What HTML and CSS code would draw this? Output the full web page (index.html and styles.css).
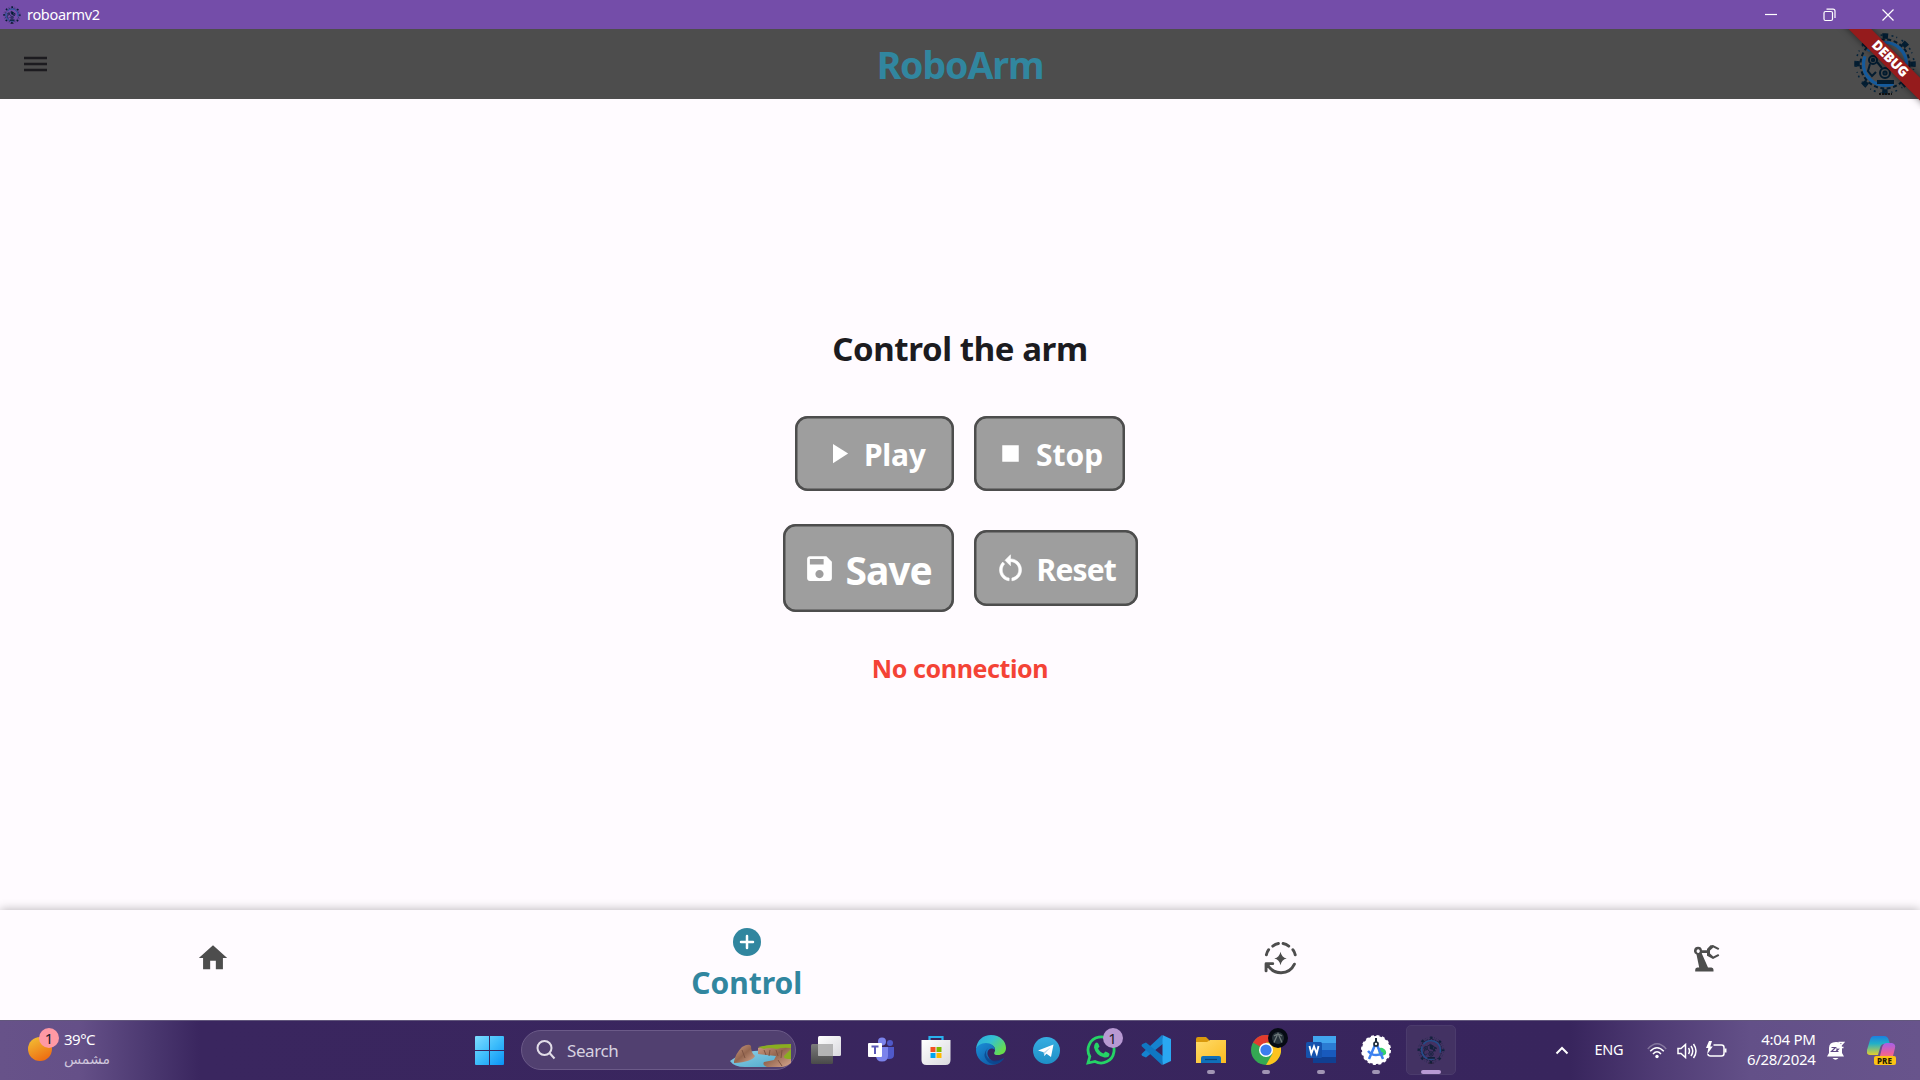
FILE: index.html
```html
<!DOCTYPE html>
<html lang="en">
<head>
<meta charset="utf-8">
<title>roboarmv2</title>
<link rel="stylesheet" href="styles.css">
</head>
<body>
<svg class="defs" aria-hidden="true">
  <defs>
    <symbol id="logo" viewBox="0 0 64 64">
      <circle cx="32" cy="32" r="24.5" fill="none" stroke="#031c30" stroke-width="2" stroke-dasharray="4 2.5"/>
      <circle cx="32" cy="32" r="28" fill="none" stroke="#031c30" stroke-width="5.5" stroke-dasharray="5.6 16.4" stroke-dashoffset="2.8"/>
      <circle cx="32" cy="32" r="29" fill="none" stroke="#06243b" stroke-width="1.5" stroke-dasharray="2 3 1 5"/>
      <circle cx="32" cy="32" r="21.5" fill="none" stroke="#145a9c" stroke-width="3.2" stroke-dasharray="50 6 60 19" stroke-dashoffset="-25"/>
      <g fill="none" stroke="#031c30" stroke-width="2">
        <circle cx="20" cy="28" r="4"/><circle cx="20" cy="28" r="1.2"/>
        <circle cx="32" cy="41" r="5"/><circle cx="32" cy="41" r="1.6"/>
        <path d="M17 32l-2 7 4 5 4-4M23 24l8-5 9 6-2 8M24 30l5 6M36 37l5-9"/>
        <path d="M40 26l5 3M38 30l4 5" stroke-width="3"/>
      </g>
      <path d="M24 48h17v4H24zM29 19l9 4-2 9-7-3z" fill="#031c30"/>
      <path d="M26 62h13" stroke="#111" stroke-width="2" stroke-dasharray="2 1"/>
    </symbol>
    <linearGradient id="win" x1="0" y1="0" x2="1" y2="1"><stop offset="0" stop-color="#7fdcff"/><stop offset=".5" stop-color="#3dbdfb"/><stop offset="1" stop-color="#0a92f5"/></linearGradient>
    <linearGradient id="sun" x1=".2" y1="0" x2=".7" y2="1"><stop offset="0" stop-color="#f2bd33"/><stop offset="1" stop-color="#ee6a11"/></linearGradient>
    <linearGradient id="sheet" x1="0" y1="0" x2="1" y2="1"><stop offset="0" stop-color="#fff"/><stop offset="1" stop-color="#d9d9de"/></linearGradient>
    <linearGradient id="slate" x1="0" y1="0" x2="0" y2="1"><stop offset="0" stop-color="#7b7b7b"/><stop offset="1" stop-color="#4a4a4a"/></linearGradient>
    <linearGradient id="edgeTop" x1="0" y1="0" x2="1" y2=".6"><stop offset="0" stop-color="#2aa9e0"/><stop offset=".5" stop-color="#34c1d2"/><stop offset="1" stop-color="#68dc4c"/></linearGradient>
    <linearGradient id="edgeLow" x1="0" y1="0" x2="1" y2="1"><stop offset="0" stop-color="#1a8fd8"/><stop offset="1" stop-color="#0e4d98"/></linearGradient>
    <linearGradient id="tele" x1="0" y1="0" x2="0" y2="1"><stop offset="0" stop-color="#37aee2"/><stop offset="1" stop-color="#1e8fc6"/></linearGradient>
    <linearGradient id="folder" x1="0" y1="0" x2="1" y2="1"><stop offset="0" stop-color="#ffdb6a"/><stop offset="1" stop-color="#fbbb1f"/></linearGradient>
    <linearGradient id="water" x1="0" y1="0" x2="1" y2="1"><stop offset="0" stop-color="#8fd2ea"/><stop offset="1" stop-color="#4aa5c8"/></linearGradient>
    <linearGradient id="rock" x1="0" y1="0" x2="1" y2="1"><stop offset="0" stop-color="#cf9c83"/><stop offset=".5" stop-color="#94664f"/><stop offset="1" stop-color="#d6a68e"/></linearGradient>
    <linearGradient id="copA" x1="0" y1="0" x2="0" y2="1"><stop offset="0" stop-color="#1b7fe0"/><stop offset=".4" stop-color="#21b0c8"/><stop offset="1" stop-color="#e6cf2c"/></linearGradient>
    <linearGradient id="copB" x1="0" y1="0" x2="0" y2="1"><stop offset="0" stop-color="#a560e8"/><stop offset=".6" stop-color="#ec5f9b"/><stop offset="1" stop-color="#f58a5c"/></linearGradient>
  </defs>
</svg>

<header class="titlebar">
  <svg class="titlebar-logo"><use href="#logo"/></svg>
  <span class="titlebar-name">roboarmv2</span>
  <div class="window-buttons">
    <svg viewBox="0 0 14 14"><path d="M1 6.5h12"/></svg>
    <svg viewBox="0 0 14 14"><rect x="1" y="3.5" width="8.5" height="9" rx="1.5"/><path d="M3.500 1.200H10a2 2 0 0 1 2 2V10"/></svg>
    <svg viewBox="0 0 14 14"><path d="M1.500 1.500l11 11M12.500 1.500l-11 11"/></svg>
  </div>
</header>

<section class="appbar">
  <svg class="menu-icon" viewBox="0 0 24 16"><path d="M0 2h23M0 8h23M0 14h23"/></svg>
  <h1 class="app-title">RoboArm</h1>
  <svg class="appbar-logo"><use href="#logo"/></svg>
  <div class="debug-corner"><span class="debug-banner">DEBUG</span></div>
</section>

<main class="content">
  <h2 class="heading">Control the arm</h2>
  <div class="button-row row-first">
    <button class="action play"><svg viewBox="0 0 24 24"><path d="M8 5v14l11-7z"/></svg><span>Play</span></button>
    <button class="action stop"><svg viewBox="0 0 24 24"><path d="M6 6h12v12H6z"/></svg><span>Stop</span></button>
  </div>
  <div class="button-row row-second">
    <button class="action save"><svg viewBox="0 0 24 24"><path d="M17 3H5c-1.110 0-2 .9-2 2v14c0 1.100.89 2 2 2h14c1.100 0 2-.9 2-2V7l-4-4zm-5 16c-1.660 0-3-1.340-3-3s1.340-3 3-3 3 1.340 3 3-1.340 3-3 3zm3-10H5V5h10v4z"/></svg><span>Save</span></button>
    <button class="action reset"><svg viewBox="0 0 24 24"><path d="M12 5V2L8 6l4 4V7c3.310 0 6 2.690 6 6 0 2.970-2.170 5.430-5 5.910v2.020c3.950-.49 7-3.850 7-7.930 0-4.420-3.580-8-8-8zm-6 8c0-1.650.67-3.150 1.760-4.240L6.340 7.340C4.900 8.790 4 10.790 4 13c0 4.080 3.050 7.440 7 7.930v-2.020c-2.830-.48-5-2.940-5-5.910z" stroke="#fff" stroke-width=".4"/></svg><span>Reset</span></button>
  </div>
  <p class="status">No connection</p>
</main>

<nav class="bottom-nav">
  <a class="nav-item"><svg class="nav-home" viewBox="0 0 24 24"><path d="M10 20v-6h4v6h5v-8h3L12 3 2 12h3v8z"/></svg></a>
  <a class="nav-item selected">
    <svg class="nav-plus" viewBox="0 0 28 28"><circle cx="14" cy="14" r="14"/><path d="M14 8v12M8 14h12" stroke="#fff" stroke-width="2.500" stroke-linecap="round"/></svg>
    <span>Control</span>
  </a>
  <a class="nav-item">
    <svg class="nav-auto" viewBox="0 0 32 32">
      <path class="line" d="M2.300 12.500Q3 9.500 4.500 7.500M8.500 4Q11 2 14 1.500M18.500 1.500Q21.500 2 24 4M28 7.500Q29.500 9.500 30.300 12.500M29.500 21.500A14.500 14.500 0 0 1 3.500 22M2 28v-7h6.500"/>
      <path d="M16 9.500q1 5.500 6 6.500q-5 1-6 6.500q-1-5.500-6-6.500q5-1 6-6.500z"/>
    </svg>
  </a>
  <a class="nav-item">
    <svg class="nav-arm" viewBox="0 0 27 27">
      <path fill-rule="evenodd" d="M4 1.800a4 4 0 0 1 4 3.400h5V4l3.500-3.800 1 .1L19 0l6.300 3.200-1 1.800-5-2.500L16 5.500v3l3.300 3 5-2.500 1 1.800L19 14l-6-3.300V8H8l-.2.500 6.200 14h3.500q2 .2 2 2.200v1.800H1.200v-1.800q0-2 2-2.200h2L2.500 9.500A4 4 0 0 1 4 1.800zm.2 2.500a1.600 1.800 0 1 0 .01 0z"/>
    </svg>
  </a>
</nav>

<footer class="taskbar">
  <div class="weather">
    <div class="weather-icon"><svg viewBox="0 0 24 24"><circle cx="12" cy="12" r="12" fill="url(#sun)"/></svg><span class="badge weather-badge">1</span></div>
    <div class="weather-text"><span>39°C</span><span class="weather-state">مشمس</span></div>
  </div>

  <div class="task start"><svg class="i29" viewBox="0 0 29 29"><path fill="url(#win)" d="M0 1q0-1 1-1h13v14H0zM15 0h13q1 0 1 1v13H15zM0 15h14v14H1q-1 0-1-1zM15 15h14v13q0 1-1 1H15z"/></svg></div>

  <div class="search">
    <svg class="search-icon" viewBox="0 0 20 20"><circle cx="8.500" cy="8" r="7"/><path d="M13.500 13l5 5.500"/></svg>
    <span>Search</span>
    <svg class="search-art" viewBox="0 0 62 24">
      <path d="M0 17Q12 8 24 7q8-1 16 0l20 1v8q-5 7-15 7H15Q4 23 0 17z" fill="url(#water)"/>
      <path d="M4 17q2-8 8-14 7-4 9-1 0 7 4 10-3 6-21 7z" fill="url(#rock)"/>
      <path d="M28 4q10-4 33-3v18q-5 4-10 4H37q-5-2-3-5l10-2 2-4-18-2z" fill="url(#rock)"/>
      <path d="M28 3q14-3 33-3v4q-9-1-14 1-8-2-13 0zM61 5v10q-8 0-7-3z" fill="#8aae20"/>
      <path d="M34 6l2 5M40 6l-1 6M46 6l2 6M52 6l-1 8M12 6l3 8M48 16l4 6" stroke="#7d5342" stroke-width="1"/>
    </svg>
  </div>

  <div class="tasks">
    <div class="task"><svg class="i30" viewBox="0 0 30 30"><rect x="0" y="9" width="22" height="20" rx="1.500" fill="url(#slate)"/><rect x="7" y="1" width="23" height="20" rx="1.500" fill="url(#sheet)"/><rect x="7" y="9" width="15" height="12" fill="#aaa" opacity=".85"/></svg></div>
    <div class="task"><svg class="i30" viewBox="0 0 30 30"><circle cx="24" cy="8" r="3" fill="#5059c9"/><path d="M19 12h9v8q0 4-5 4h-4z" fill="#5059c9"/><circle cx="16" cy="6.500" r="4" fill="#7b83eb"/><path d="M10 12h12v8.500q0 6-6 6t-6-6z" fill="#7b83eb"/><rect x="2" y="8" width="14" height="14" rx="1" fill="#fff"/><path d="M5.500 11.500h7M9 11.500V19" stroke="#5a58b8" stroke-width="2"/></svg></div>
    <div class="task"><svg class="i30" viewBox="0 0 30 30"><path d="M8.500 7V2h13v5" fill="none" stroke="#29b1ee" stroke-width="2.200"/><path d="M.5 5h29v20q0 5-5 5H5.500q-5 0-5-5z" fill="url(#sheet)"/><path d="M9.500 12h5v5h-5z" fill="#f25022"/><path d="M15.500 12h5v5h-5z" fill="#7fba00"/><path d="M9.500 18h5v5h-5z" fill="#00a4ef"/><path d="M15.500 18h5v5h-5z" fill="#ffb900"/></svg></div>
    <div class="task"><svg class="i30" viewBox="0 0 30 30"><path d="M0 14C1 5 7 0 15 0c9 0 15 6 15 13 0 5-4 7-8 7-5 0-4-2-3-4 1-4-3-7-8-7-5 0-9 2-11 5z" fill="url(#edgeTop)"/><path d="M0 15C0 11 5 8 10 8c5 0 9 3 9 7-5-4-9 1-7 6 3 7 10 7 16 2-2 4-7 7-13 7C7 30 0 23 0 15z" fill="url(#edgeLow)"/><path d="M12 13q-4 5 0 10t16 0q-2 4-6 5.500-8 2-12-4t2-11.500z" fill="#0c3f86" opacity=".7"/></svg></div>
    <div class="task"><svg class="i27" viewBox="0 0 27 27"><circle cx="13.500" cy="13.500" r="13.500" fill="url(#tele)"/><path d="M5 13.500L20.500 7.500 18 20l-4.500-3.200L11.300 19l-.6-3.700z" fill="#fff"/><path d="M10.700 15.300l7-5-5.500 6-.9 2.700z" fill="#b9d9ec"/></svg></div>
    <div class="task"><svg class="i30" viewBox="0 0 30 30"><path d="M2 28l1.800-6.500A13 13 0 1 1 9 26.500z" fill="none" stroke="#25d366" stroke-width="2.800"/><path d="M9.500 8q2-1.500 3 1l1 2.500-1.500 2q2 4 5.500 5l2-2q4 1.500 4 2.500 0 4-5 3.500Q10 21 8 12.500 8 9.500 9.500 8z" fill="#25d366"/></svg><span class="badge chat-badge">1</span></div>
    <div class="task"><svg class="i30" viewBox="0 0 30 30"><path d="M21 0l2 8L5 22.500 1.500 21Q-.5 19.500 1.500 18z" fill="#1583cf"/><path d="M5 7.500L23 22l-2 8L1.500 12Q-.5 10.500 1.500 9z" fill="#0f77c2"/><path d="M21.500 0L30 4v22l-8.500 4z" fill="#2aa8f2"/></svg></div>
    <div class="task running"><svg class="i30" viewBox="0 0 30 30"><path d="M0 4q0-2 2-2h8l3 3v5H0z" fill="#d9990c"/><path d="M0 7h11l3-2h16v23H0z" fill="url(#folder)"/><path d="M5 28v-5q0-2 2-2h16q2 0 2 2v5z" fill="#0f6fb9"/><path d="M9 24.500h12" stroke="#0a4378" stroke-width="1.200"/></svg></div>
    <div class="task running"><svg class="i30" viewBox="0 0 30 30"><circle cx="15" cy="15" r="15" fill="#34a853"/><path d="M15 15L2 7.500A15 15 0 0 1 28 7.500H15z" fill="#e33b2e"/><path d="M15 7.500h13A15 15 0 0 1 15 30l6.500-11.300z" fill="#fcc31e"/><circle cx="15" cy="15" r="7" fill="#fff"/><circle cx="15" cy="15" r="5.600" fill="#3b7ded"/></svg>
      <svg class="profile" viewBox="0 0 20 20"><circle cx="10" cy="10" r="10" fill="#060b14"/><circle cx="10" cy="10" r="6" fill="#26323a"/><path d="M6 14.500l4-9 4 9M6 8q4-3 8 0" fill="none" stroke="#6f7a7c" stroke-width="1.300"/></svg></div>
    <div class="task running"><svg class="i30" viewBox="0 0 30 30"><rect x="7" y="1" width="23" height="27" rx="1.500" fill="#185abd"/><path d="M7 1h23v7H7z" fill="#41a5ee"/><path d="M7 8h23v7H7z" fill="#2b7cd3"/><path d="M7 22h23v6H7z" fill="#103f91"/><rect x="0" y="7" width="16" height="16" rx="1.500" fill="#1552ad"/><path d="M3.500 11l1.800 7.500L8 11.500l2.700 7 1.800-7.500" fill="none" stroke="#fff" stroke-width="1.900"/></svg></div>
    <div class="task running"><svg class="i30" viewBox="0 0 30 30"><circle cx="15" cy="15" r="14" fill="#fff"/><circle cx="15" cy="15" r="14" fill="none" stroke="#fff" stroke-width="2" stroke-dasharray="3 2.500"/><path d="M17 14a5 5 0 0 1 8 5q-3 3-7 1z" fill="#35d16d"/><path d="M14 10L8 24M16 10l6 14M7 16q6 7 15 2" fill="none" stroke="#3d82f0" stroke-width="2.500"/><path d="M15 3v4" stroke="#1d2b3a" stroke-width="2"/><circle cx="15" cy="9" r="2" fill="#fff" stroke="#1d2b3a" stroke-width="1.700"/></svg></div>
    <div class="task running active"><svg class="i28"><use href="#logo"/></svg></div>
  </div>

  <div class="tray">
    <svg class="chevron" viewBox="0 0 14 9"><path d="M1.500 7.500L7 2l5.500 5.500"/></svg>
    <span class="lang">ENG</span>
    <svg class="wifi" viewBox="0 0 20 16"><path d="M.8 6Q10-4.500 19.200 6" opacity=".3"/><path d="M3.200 8.300q6.800-7.300 13.600 0M6 11q4-4.300 8 0"/><circle cx="10" cy="13.500" r="1.700" class="solid"/></svg>
    <svg class="speaker" viewBox="0 0 20 16"><path d="M1 5.500h3L8.500 1.500v13L4 10.500H1zM11.500 5q2 3 0 6M14 3q3.500 5 0 10M16.500 1q5 7 0 14"/></svg>
    <svg class="battery" viewBox="0 0 21 17"><path d="M7.500 4h8q2.500 0 2.500 2.500v6q0 2.500-2.500 2.500h-11Q2 15 2 13"/><path d="M19.500 7.500v4" stroke-width="2"/><path class="solid" d="M3 0L0 7h2.300L1 13.500 6.800 5.500H4.300L6 0z"/></svg>
    <div class="clock"><span>4:04 PM</span><span>6/28/2024</span></div>
    <svg class="bell" viewBox="0 0 18 19"><path d="M0 15.500L2 12V7q0-6 7-6 5 0 6 5v6l2 3.500zM5.500 17h6q-3 3.500-6 0z" fill="#fff"/><path d="M4.500 6.500h4l-4 4h4M9 8h2.500L9 10.500h2.500" fill="none" stroke="#5e4885" stroke-width="1.200"/><path d="M11.500 1.500h5l-4.500 5h4.500" fill="none" stroke="#fff" stroke-width="1.500"/></svg>
    <div class="copilot"><svg viewBox="0 0 29 28"><path d="M7 0h10q4 0 5 5l1 3h-6q-3 0-4 4l-2 7H3q-4 0-3-5L3 4q1-4 4-4z" fill="url(#copA)"/><path d="M20 7h5q4 1 3 5l-2 8q-1 4-5 4H12l3-12q1-5 5-5z" fill="url(#copB)"/></svg><span>PRE</span></div>
  </div>
</footer>
</body>
</html>
```
FILE: styles.css
```css
* { box-sizing: border-box; }

body {
  margin: 0;
  width: 1920px;
  height: 1080px;
  display: flex;
  flex-direction: column;
  overflow: hidden;
  background: #fffbff;
  font-family: "Noto Sans", "Open Sans", "DejaVu Sans", sans-serif;
}

svg { display: block; flex: none; }
.defs { position: absolute; width: 0; height: 0; }
h1, h2, p { margin: 0; }

/* Window title bar */
.titlebar {
  height: 29px;
  flex: none;
  display: flex;
  align-items: center;
  padding-left: 3px;
  background: #744da9;
  color: #fff;
}
.titlebar-logo { width: 18px; height: 18px; }
.titlebar-name { margin-left: 6px; font-size: 14.500px; letter-spacing: -0.3px; line-height: 20px; padding-bottom: 2px; }
.window-buttons { margin-left: auto; display: flex; gap: 44.500px; padding-right: 25px; }
.window-buttons svg { width: 14px; height: 14px; fill: none; stroke: #fff; stroke-width: 1.2; }

/* App bar */
.appbar {
  position: relative;
  height: 70px;
  flex: none;
  display: flex;
  align-items: center;
  justify-content: space-between;
  padding: 0 3px 0 24px;
  background: #4d4d4d;
}
.menu-icon { width: 24px; height: 16px; margin-right: 19px; stroke: #1c1b1f; stroke-width: 2.4; }
.app-title { padding-top: 1px; color: #31869f; font-size: 37.500px; line-height: 50px; letter-spacing: -1.1px; }
.appbar-logo { width: 64px; height: 64px; }
.debug-corner { position: absolute; top: 0; right: 0; width: 90px; height: 80px; overflow: hidden; }
.debug-banner {
  position: absolute;
  left: 0;
  top: 21.500px;
  width: 120px;
  height: 15.500px;
  transform: rotate(45deg);
  background: #951b1c;
  box-shadow: 0 0 7px rgba(0, 0, 0, 0.5);
  color: #fff;
  text-align: center;
  font-size: 13.500px;
  font-weight: 900;
  line-height: 15.500px;
  letter-spacing: -0.3px;
}

/* Control screen */
.content {
  height: 811px;
  flex: none;
  display: flex;
  flex-direction: column;
  align-items: center;
  padding-top: 229px;
}
.heading { padding-top: 1px; height: 40px; color: #1c1b1f; font-size: 33px; line-height: 40px; letter-spacing: -0.4px; }
.button-row { display: flex; align-items: center; gap: 20px; }
.row-first { margin-top: 47.500px; }
.row-second { margin-top: 33px; }
.action {
  height: 75.500px;
  display: flex;
  align-items: center;
  border: 0;
  box-shadow: inset 0 0 0 2.500px #4d4d4d;
  border-radius: 12.500px;
  padding: 0;
  background: #9e9e9e;
  color: #fff;
  font-family: inherit;
  font-weight: 700;
  font-size: 30px;
  line-height: 40px;
  letter-spacing: -0.3px;
}
.action svg { width: 33px; height: 33px; fill: currentColor; }
.action span { padding-top: 4px; }
.play { width: 158.500px; padding-left: 27px; gap: 9px; }
.stop { width: 151.500px; padding-left: 20.500px; gap: 9px; letter-spacing: 0; }
.save { width: 171px; height: 88px; padding-left: 20px; gap: 10px; font-size: 39px; letter-spacing: -1px; }
.reset { width: 164px; padding-left: 20.500px; gap: 9.500px; letter-spacing: -0.8px; }
.status { margin-top: 41px; color: #f44336; font-size: 25px; font-weight: 700; line-height: 30px; letter-spacing: -0.4px; }

/* Bottom navigation */
.bottom-nav {
  height: 110px;
  flex: none;
  display: flex;
  background: #fffbff;
  box-shadow: 0 0 10px rgba(0, 0, 0, 0.3);
}
.nav-item { flex: 2; display: flex; flex-direction: column; align-items: center; padding-top: 31px; fill: #4d4d4d; }
.nav-item.selected { flex: 3; padding-top: 18px; fill: #31869f; color: #31869f; font-size: 30px; font-weight: 700; line-height: 36px; }
.nav-item.selected span { margin-top: 9px; }
.nav-home { width: 34px; height: 34px; }
.nav-plus { width: 28px; height: 28px; }
.nav-auto { width: 33px; height: 33px; margin-top: 1px; }
.nav-auto .line { fill: none; stroke: #4d4d4d; stroke-width: 2.8; stroke-linecap: round; stroke-linejoin: round; }
.nav-arm { width: 27px; height: 27px; margin: 4px 0 0 1px; }

/* Taskbar */
.taskbar {
  height: 60px;
  flex: none;
  position: relative;
  display: flex;
  align-items: center;
  border-top: 1px solid #62577c;
  background: linear-gradient(90deg, #675289 0, #655088 80px, #4b3870 150px, #3a265f 200px, #38255d 1570px, #503c75 1660px, #635088 1750px, #68548c 1920px);
  color: #fff;
  font-size: 15px;
}
.weather { width: 461.500px; display: flex; padding: 0 0 3px 28px; gap: 12px; }
.weather-icon { position: relative; padding-top: 8px; }
.weather-icon svg { width: 24px; height: 24px; }
.badge { position: absolute; width: 20px; height: 20px; border-radius: 50%; color: #221b2b; font-size: 15px; line-height: 20px; text-align: center; }
.weather-badge { left: 11px; top: -1px; background: #ff99a4; }
.weather-text { display: flex; flex-direction: column; line-height: 20px; letter-spacing: -0.5px; }
.weather-state { color: #cfc6dc; font-size: 14px; letter-spacing: 0; }

.task { position: relative; width: 55px; height: 50px; display: flex; align-items: center; justify-content: center; }
.tasks { display: flex; padding-bottom: 1px; }
.i27 { width: 27px; height: 27px; }
.i28 { width: 28px; height: 28px; }
.i29 { width: 29px; height: 29px; }
.i30 { width: 30px; height: 30px; }
.chat-badge { left: 29px; top: 3px; background: #b899d3; }
.profile { position: absolute; left: 29px; top: 3px; width: 20px; height: 20px; }
.running::after { content: ""; position: absolute; left: 23.500px; bottom: 1px; width: 8px; height: 4px; border-radius: 2px; background: #a195b4; }
.active { width: 50px; margin-left: 2.500px; border: 1px solid #4b3b6c; border-radius: 5px; background: #433263; }
.active svg { opacity: 0.75; }
.active::after { left: 14px; bottom: 0; width: 20px; background: #b899d3; }

.search {
  width: 275px;
  height: 40px;
  margin: 0 2.500px 1px 4.500px;
  display: flex;
  align-items: center;
  border: 1px solid #6b5a88;
  border-radius: 20px;
  padding: 0 3px 0 14px;
  background: #514070;
  color: #d8d2e0;
  font-size: 17px;
}
.search span { margin-left: 11px; letter-spacing: -0.4px; }
.search-icon { width: 20px; height: 20px; fill: none; stroke: #e2dde8; stroke-width: 2; }
.search-art { width: 62px; height: 24px; margin-left: auto; margin-top: 13px; align-self: flex-start; }

.tray { margin-left: auto; padding-right: 24.500px; display: flex; align-items: center; }
.tray > svg { fill: none; stroke: #fff; stroke-width: 1.5; }
.tray .solid { fill: #fff; stroke: none; }
.tray > .chevron { width: 14px; height: 9px; margin-top: -1px; stroke-width: 2; }
.lang { width: 29px; margin-left: 26px; font-size: 14.500px; letter-spacing: -0.3px; padding-bottom: 3px; }
.wifi { width: 20px; height: 16px; margin-left: 23px; }
.speaker { width: 20px; height: 16px; margin-left: 10px; }
.battery { width: 21px; height: 17px; margin-left: 9px; margin-top: -3px; }
.clock { width: 80px; margin-left: 9px; padding-bottom: 3px; display: flex; flex-direction: column; align-items: flex-end; line-height: 20px; letter-spacing: -0.3px; }
.tray > .bell { width: 18px; height: 19px; margin-left: 11px; stroke: none; }
.copilot { position: relative; width: 29px; margin-left: 22px; margin-top: -2px; }
.copilot svg { width: 29px; height: 28px; }
.copilot span { position: absolute; left: 7px; bottom: -1px; width: 22px; height: 9px; border-radius: 2px; background: #fcc314; color: #241a05; font-size: 8px; font-weight: 800; line-height: 9px; text-align: center; }
```
